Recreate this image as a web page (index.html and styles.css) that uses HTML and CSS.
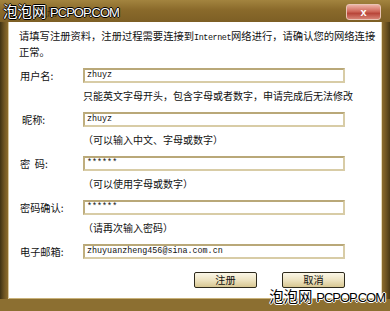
FILE: index.html
```html
<!DOCTYPE html>
<html lang="zh-CN">
<head>
<meta charset="UTF-8">
<meta name="viewport" content="width=device-width, initial-scale=1.0">
<title>注册</title>
<link rel="stylesheet" href="styles.css">
</head>
<body>
<div class="window">
  <div class="titlebar">
    <span class="title">注册</span>
    <button class="close">x</button>
  </div>
  <div class="frame">
    <div class="main">
      <p class="intro">请填写注册资料，注册过程需要连接到<span class="mono">Internet</span>网络进行，请确认您的网络连接正常。</p>
      <div class="form">
        <label class="label">用户名:</label>
        <div class="field">zhuyz</div>
        <div class="hint">只能英文字母开头，包含字母或者数字，申请完成后无法修改</div>

        <label class="label indent">昵称:</label>
        <div class="field">zhuyz</div>
        <div class="hint">（可以输入中文、字母或数字）</div>

        <label class="label">密&nbsp;&nbsp;码:</label>
        <div class="field">******</div>
        <div class="hint">（可以使用字母或数字）</div>

        <label class="label">密码确认:</label>
        <div class="field">******</div>
        <div class="hint">（请再次输入密码）</div>

        <label class="label">电子邮箱:</label>
        <div class="field">zhuyuanzheng456@sina.com.cn</div>
      </div>
      <div class="actions">
        <button class="btn">注册</button>
        <button class="btn">取消</button>
      </div>
    </div>
  </div>
  <div class="wm wm-top"><span class="wm-cn">泡泡网</span> <span class="wm-en">PCPOP.COM</span></div>
  <div class="wm wm-bottom"><span class="wm-cn">泡泡网</span> <span class="wm-en">PCPOP.COM</span></div>
</div>
</body>
</html>
```

FILE: styles.css
```css
html, body { margin: 0; padding: 0; background: #fff; }
body { font-family: "Noto Sans CJK SC", "Liberation Sans", sans-serif; color: #111; }

.window { position: relative; width: 390px; height: 311px; display: flex; flex-direction: column; overflow: hidden; }

.titlebar { height: 22px; flex: none; display: flex; align-items: center; justify-content: space-between; padding: 0 9px 0 36px; box-sizing: border-box; background: linear-gradient(#a3843f, #8a6a2b 45%, #7d5f25); }
.title { font-size: 11px; color: #3a2a0c; }
.close { width: 35px; height: 16px; padding: 0; margin-top: 1px; border: 1px solid #e9c3b4; border-radius: 3px; background: linear-gradient(#eeb3a6, #d06a5c 45%, #b8463a 60%, #d78274); color: #fff; font: bold 11px "Liberation Sans", sans-serif; line-height: 14px; }

.frame { flex: 1; display: flex; padding: 0 8px 12px 8px; background: linear-gradient(90deg, #3f3213, #6c5321 4px, #8d6d2d 8px, #8d6d2d 382px, #6f5522 386px, #4a3914); }
.frame { box-shadow: inset 0 -12px 0 0 #8c6f31, inset 0 -4px 0 0 #3d2f12; }
.main { flex: 1; background: #fff; padding: 7px 0 0 0; box-shadow: inset 1px 0 0 #d9c9a0, inset -1px 0 0 #e6d9b8, inset 0 -1px 0 #c9b27a; }

.intro { margin: 0 4px 0 11px; font-size: 10.3px; line-height: 13px; }
.mono { font-family: "Liberation Mono", monospace; font-size: 8.4px; letter-spacing: -0.4px; }

.form { display: grid; grid-template-columns: 75px 262px; grid-auto-rows: auto; margin-top: 10px; align-items: center; }
.label { padding-left: 12px; font-size: 10.2px; line-height: 13px; }
.label.indent { padding-left: 14px; }
.field { height: 15px; box-sizing: border-box; border: 2px solid #d8cca6; border-top-color: #b9a878; border-left-color: #bfae7e; background: #fff; font-family: "Liberation Mono", monospace; font-size: 8.4px; line-height: 11px; padding-left: 2px; color: #111; }
.hint { grid-column: 2; height: 29px; line-height: 26px; font-size: 10px; white-space: nowrap; }

.actions { display: flex; justify-content: flex-end; gap: 25px; margin: 13px 37px 0 0; }
.btn { width: 63px; height: 16px; padding: 0; border: 1px solid #2e2a1c; border-radius: 2px; background: linear-gradient(#fbf7e8, #ece1bd 55%, #d8c792); font-family: "Noto Sans CJK SC", sans-serif; font-size: 10.2px; line-height: 14px; color: #111; }

.wm { position: absolute; white-space: nowrap; line-height: 16px; }
.wm-cn { font-family: "Noto Sans CJK SC", sans-serif; font-size: 14.5px; }
.wm-en { font-family: "Liberation Sans", sans-serif; font-size: 13px; letter-spacing: -1px; }
.wm-top { left: 3px; top: 2px; color: #fff; text-shadow: 1px 0 0 #000, -1px 0 0 #000, 0 1px 0 #000, 0 -1px 0 #000; }
.wm-bottom { right: 5px; bottom: 5px; color: #000; text-shadow: 1px 0 0 #fff, -1px 0 0 #fff, 0 1px 0 #fff, 0 -1px 0 #fff; }
```
